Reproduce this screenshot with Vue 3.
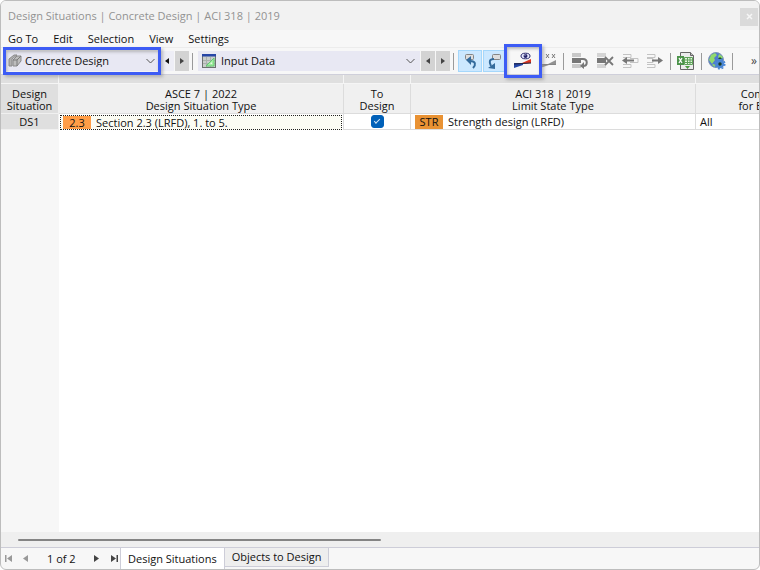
<script setup>
import { ref } from "vue";

const menus = ["Go To", "Edit", "Selection", "View", "Settings"];
const tabs = ["Design Situations", "Objects to Design"];

const addon = ref("Concrete Design");
const view = ref("Input Data");
const activeTab = ref(tabs[0]);

const columns = [
  { key: "ds", lines: ["Design", "Situation"] },
  { key: "type", lines: ["ASCE 7 | 2022", "Design Situation Type"] },
  { key: "active", lines: ["To", "Design"] },
  { key: "limit", lines: ["ACI 318 | 2019", "Limit State Type"] },
  { key: "combos", lines: ["Combinations to Design", "for Enumeration Method"] },
];

const rows = ref([
  {
    id: "DS1",
    typeTag: "2.3",
    type: "Section 2.3 (LRFD), 1. to 5.",
    active: true,
    limitTag: "STR",
    limit: "Strength design (LRFD)",
    combos: "All",
  },
]);
</script>

<template>
  <div class="window">
    <header class="titlebar">
      <h1>Design Situations | Concrete Design | ACI 318 | 2019</h1>
      <button class="close" aria-label="Close">
        <svg width="7" height="7" viewBox="0 0 7 7"><path d="M1 1l5 5M6 1L1 6" stroke="#f6f6f6" stroke-width="1.500" /></svg>
      </button>
    </header>

    <nav class="menubar">
      <button v-for="menu in menus" :key="menu">{{ menu }}</button>
    </nav>

    <div class="toolbar">
      <div class="combo addon marked">
        <svg class="combo-icon" width="14" height="14" viewBox="0 0 14 14">
          <path d="M1 5l5-4h3L4 5v7H1z" fill="#b0b0b0" stroke="#8a8a8a" />
          <path d="M5 6l4-4h4v5l-4 5H5z" fill="#bdbdbd" stroke="#8a8a8a" />
          <path d="M5 6h4v6M9 6l4-4" fill="none" stroke="#7b7b7b" />
        </svg>
        <select v-model="addon" aria-label="Add-on">
          <option>Concrete Design</option>
        </select>
        <svg class="chevron" width="9" height="6" viewBox="0 0 9 6"><path d="M.5 1l4 4 4-4" /></svg>
      </div>
      <button class="step plain" aria-label="Previous add-on">
        <svg width="4" height="6" viewBox="0 0 4 6"><path d="M4 0v6L0 3z" fill="#111" /></svg>
      </button>
      <button class="step" aria-label="Next add-on">
        <svg width="4" height="6" viewBox="0 0 4 6"><path d="M0 0v6l4-3z" fill="#444" /></svg>
      </button>
      <span class="sep"></span>

      <div class="combo view">
        <svg class="combo-icon" width="14" height="14" viewBox="0 0 14 14">
          <rect x=".5" y=".5" width="13" height="13" fill="#c9cdcb" stroke="#6b716e" />
          <path d="M0 0h14v2.500H0z" fill="#2746a6" />
          <path d="M1 6.500h12M1 9.500h12M4.500 3v10M8.500 3v10" stroke="#aab0ad" />
          <path d="M12 4v8H4z" fill="#a1eda0" stroke="#62c873" />
          <path d="M10 8v2H8z" fill="#e9f7e9" />
        </svg>
        <select v-model="view" aria-label="Table category">
          <option>Input Data</option>
        </select>
        <svg class="chevron" width="9" height="6" viewBox="0 0 9 6"><path d="M.5 1l4 4 4-4" /></svg>
      </div>
      <button class="step" aria-label="Previous table">
        <svg width="4" height="6" viewBox="0 0 4 6"><path d="M4 0v6L0 3z" fill="#444" /></svg>
      </button>
      <button class="step" aria-label="Next table">
        <svg width="4" height="6" viewBox="0 0 4 6"><path d="M0 0v6l4-3z" fill="#444" /></svg>
      </button>
      <span class="sep"></span>

      <button class="tool on" aria-label="Synchronize selection to model">
        <svg width="18" height="18" viewBox="0 0 18 18">
          <rect x="4.500" y="2.500" width="8" height="5" rx="1" fill="#dedede" stroke="#858585" />
          <path d="M12 16c3-3 3-7-3-7" fill="none" stroke="#346b9c" stroke-width="2" />
          <path d="M10 4v9L5 8z" fill="#346b9c" />
        </svg>
      </button>
      <button class="tool on" aria-label="Synchronize selection from model">
        <svg width="18" height="18" viewBox="0 0 18 18">
          <rect x="6.500" y="2.500" width="8" height="5" rx="1" fill="#dedede" stroke="#858585" />
          <path d="M8 7c-5 0-5 3-3 7" fill="none" stroke="#346b9c" stroke-width="2" />
          <path d="M2 16l7-5v6z" fill="#346b9c" />
        </svg>
      </button>
      <button class="tool marked wide" aria-label="Show result diagram">
        <svg width="20" height="18" viewBox="0 0 20 18">
          <path d="M1 11l9 0v2l-9 3z" fill="#2446a8" />
          <path d="M9 11l9-4v4l-9 1z" fill="#dc3420" />
          <path d="M1 12l17-1" stroke="#23233f" />
          <ellipse cx="12.500" cy="4" rx="4.500" ry="2.800" fill="#e9ebff" stroke="#27276b" />
          <circle cx="12.500" cy="4" r="2" fill="#24246c" />
          <circle cx="12" cy="3" r=".6" fill="#fff" />
        </svg>
      </button>
      <button class="tool" aria-label="Show result values">
        <svg width="18" height="18" viewBox="0 0 18 18">
          <path d="M1 12h9v1l-9 3zM9 12l8-4v4z" fill="#929292" />
          <path d="M1 12.500h16" stroke="#858585" />
          <path d="M2 6h1M7 2l3 4M10 2L7 6M13 2l3 4M16 2l-3 4" fill="none" stroke="#777" />
        </svg>
      </button>
      <span class="sep"></span>

      <button class="tool row" aria-label="Restore row">
        <svg width="18" height="18" viewBox="0 0 18 18">
          <path d="M1 1h9v4H1zM1 12h9v4H1z" fill="#c8c8c8" />
          <path d="M1 6h9v5H1z" fill="#777" />
          <path d="M9 7h3c5 0 5 7 0 7" fill="none" stroke="#777" stroke-width="2" />
          <path d="M13 10v7l-4-3z" fill="#777" />
        </svg>
      </button>
      <button class="tool row" aria-label="Delete row">
        <svg width="18" height="18" viewBox="0 0 18 18">
          <path d="M1 1h9v4H1zM1 12h9v4H1z" fill="#d4d4d4" />
          <path d="M1 6h9v5H1z" fill="#777" />
          <path d="M9 5l8 8M17 5l-8 8" stroke="#777" stroke-width="1.800" />
        </svg>
      </button>
      <button class="tool row" aria-label="Insert row">
        <svg width="18" height="18" viewBox="0 0 18 18">
          <path d="M2 2.500h8v3H2M2 12.500h8v3H2M9 6.500h8v4H9" fill="none" stroke="#c3c3c3" />
          <path d="M5 8.500h8" stroke="#777" stroke-width="2" />
          <path d="M6 5v7L1 8.500z" fill="#777" />
        </svg>
      </button>
      <button class="tool row" aria-label="Append row">
        <svg width="18" height="18" viewBox="0 0 18 18">
          <path d="M1 2.500h8v3H1M1 12.500h8v3H1M1 6.500h6v4H1" fill="none" stroke="#c3c3c3" />
          <path d="M6 8.500h8" stroke="#777" stroke-width="2" />
          <path d="M12 5v7l5-3.500z" fill="#777" />
        </svg>
      </button>
      <span class="sep"></span>

      <button class="tool" aria-label="Export to Excel">
        <svg width="18" height="18" viewBox="0 0 18 18">
          <path d="M3.500 .5h10l3 3v14h-13z" fill="#ececec" stroke="#666" />
          <path d="M13.500 .5v3h3" fill="#bbb" stroke="#666" />
          <path d="M7.500 5.500h8v7h-8zM8 8h7M8 10.500h7M10.500 5.500v7M13 5.500v7" fill="#e4f3e0" stroke="#5ea258" />
          <rect y="4" width="7" height="9" fill="#4c934a" />
          <path d="M2 6l3 5M5 6l-3 5" stroke="#fff" stroke-width="1.300" />
          <path d="M8 14h5l-2.500 3z" fill="#4b9b42" />
        </svg>
      </button>
      <span class="sep"></span>
      <button class="tool" aria-label="Online settings">
        <svg width="18" height="18" viewBox="0 0 18 18">
          <circle cx="8" cy="8" r="7.500" fill="#5079d0" stroke="#8197b5" />
          <path d="M3 3l4-2 2 2-3 3 1 2-3 4-3-4zM11 2l4 3-2 3-3-3zM5 12l3 1-1 2-3-2z" fill="#91da6c" />
          <circle cx="12" cy="12" r="3" fill="none" stroke="#4a86d4" stroke-width="2.500" />
          <circle cx="12" cy="12" r="4.800" fill="none" stroke="#4a86d4" stroke-width="1.500" stroke-dasharray="2 1.770" />
          <circle cx="12" cy="12" r="1.700" fill="#173c27" />
          <path d="M10 7l2-2 2 2z" fill="#174b2a" />
        </svg>
      </button>
      <span class="sep"></span>
      <button class="more" aria-label="More tools">»</button>
    </div>

    <main class="grid">
      <table>
        <colgroup>
          <col v-for="col in columns" :key="col.key" :class="col.key" />
        </colgroup>
        <thead>
          <tr class="strip">
            <td v-for="col in columns" :key="col.key"></td>
          </tr>
          <tr>
            <th v-for="col in columns" :key="col.key" scope="col">
              <template v-for="(line, i) in col.lines" :key="line"><br v-if="i" />{{ line }}</template>
            </th>
          </tr>
        </thead>
        <tbody>
          <tr v-for="row in rows" :key="row.id">
            <th scope="row">{{ row.id }}</th>
            <td class="current"><div><span class="tag">{{ row.typeTag }}</span>{{ row.type }}</div></td>
            <td class="check"><input v-model="row.active" type="checkbox" :aria-label="'Design ' + row.id" /></td>
            <td class="limit"><div><span class="tag dark">{{ row.limitTag }}</span>{{ row.limit }}</div></td>
            <td class="combos">{{ row.combos }}</td>
          </tr>
        </tbody>
      </table>
    </main>

    <div class="scrollbar"><div class="thumb"></div></div>

    <footer class="footer">
      <div class="pager">
        <button class="dim" aria-label="First table">
          <svg width="8" height="7" viewBox="0 0 8 7"><path d="M0 0h1.500v7H0zM7 0v7L2 3.500z" /></svg>
        </button>
        <button class="dim" aria-label="Previous table">
          <svg width="5" height="7" viewBox="0 0 5 7"><path d="M5 0v7L0 3.500z" /></svg>
        </button>
        <span class="page">1 of 2</span>
        <button aria-label="Next table">
          <svg width="5" height="7" viewBox="0 0 5 7"><path d="M0 0v7l5-3.500z" /></svg>
        </button>
        <button aria-label="Last table">
          <svg width="8" height="7" viewBox="0 0 8 7"><path d="M1 0v7l5-3.500zM6.500 0H8v7H6.500z" /></svg>
        </button>
      </div>
      <button
        v-for="tab in tabs"
        :key="tab"
        class="tab"
        :class="{ active: tab === activeTab }"
        @click="activeTab = tab"
      >
        {{ tab }}
      </button>
    </footer>
  </div>
</template>

<style>
body {
  margin: 0;
  background: #fff;
}
</style>

<style scoped>
.window {
  box-sizing: border-box;
  min-height: 100vh;
  display: flex;
  flex-direction: column;
  overflow: hidden;
  border: 1px solid #bdbdbd;
  border-radius: 6px;
  background: #f7f7f7;
  color: #111;
  font: 11px/12px "Open Sans", "Noto Sans", sans-serif;
}

button,
select {
  border: 0;
  padding: 0;
  background: none;
  color: inherit;
  font: inherit;
}

svg {
  display: block;
}

.titlebar {
  display: flex;
  align-items: center;
  justify-content: space-between;
  height: 29px;
  padding-left: 7px;
  background: #f2f2f2;
}

h1 {
  margin: 0;
  color: #929292;
  font-size: 11px;
  font-weight: 400;
}

.close {
  display: grid;
  place-items: center;
  width: 18px;
  height: 18px;
  margin: 2px 1px 0 0;
  background: #dadada;
}

.menubar {
  display: flex;
  align-items: center;
  gap: 15px;
  height: 17px;
  padding-left: 7px;
}

.toolbar {
  display: flex;
  align-items: center;
  height: 26px;
  padding-left: 3px;
  border-top: 1px solid #ececec;
  border-bottom: 1px solid #cfcfda;
}

.combo {
  position: relative;
  display: flex;
  align-items: center;
  height: 20px;
  background: #e8e8f3;
}

.combo.addon {
  width: 156px;
}

.combo.view {
  width: 222px;
  margin-left: 2px;
}

.combo select {
  width: 100%;
  height: 100%;
  padding-left: 21px;
  appearance: none;
}

.combo.view select {
  padding-left: 23px;
}

.combo-icon {
  position: absolute;
  left: 4px;
}

.chevron {
  position: absolute;
  right: 5px;
  fill: none;
  stroke: #555;
}

/* blue frame lies over the neighbouring tools */
.marked {
  position: relative;
}

.marked::after {
  content: "";
  position: absolute;
  inset: -4px -1px;
  z-index: 1;
  border: 3px solid #3d5cf5;
  box-shadow: 2px 2px 3px #8888, inset 1px 2px 3px #8888;
  pointer-events: none;
}

.step {
  display: grid;
  place-items: center;
  flex: none;
  width: 14px;
  height: 20px;
  margin-left: 1px;
  background: #d3d3d3;
}

.step.plain {
  margin-left: 0;
  background: #eeeef6;
}

.sep {
  flex: none;
  width: 1px;
  height: 17px;
  margin: 0 3px;
  background: #9a9a9a;
}

.tool {
  display: grid;
  place-items: center;
  flex: none;
  width: 24px;
  height: 22px;
}

.tool.on {
  box-sizing: border-box;
  margin-left: 1px;
  border: 1px solid #a5d7fb;
  background: #cce8ff;
}

.tool.wide {
  width: 38px;
  height: 28px;
  margin: 0 -6px 0 -3px;
}

.tool.wide::after {
  inset: -3px 0;
}

.tool.row {
  width: 25px;
}

.more {
  margin: 0 2px 0 auto;
  color: #444;
  font-size: 12px;
}

.grid {
  flex: 1;
  overflow: hidden;
  background: linear-gradient(to right, #f7f7f7 58px, #fff 58px);
}

table {
  width: 908px;
  table-layout: fixed;
  border-collapse: separate;
  border-spacing: 0;
}

col.ds {
  width: 58px;
}

col.type,
col.limit {
  width: 285px;
}

col.active {
  width: 67px;
}

col.combos {
  width: 213px;
}

th,
td {
  box-sizing: border-box;
  padding: 0;
  border-right: 1px solid #dcdcdc;
  border-bottom: 1px solid #dcdcdc;
  font-weight: 400;
  white-space: nowrap;
}

.strip td {
  height: 9px;
  border-right-color: #f5f5f5;
  border-bottom-color: #f5f5f5;
  background: #dfdfdf;
}

thead th {
  height: 30px;
  padding-top: 3px;
  background: #f0f0f0;
}

thead th:first-child,
tbody th {
  border-color: #f0f0f0;
  background: #dfdfdf;
}

tbody th,
tbody td {
  height: 16px;
}

.current {
  border-bottom: 0;
}

.current div {
  box-sizing: border-box;
  display: flex;
  height: 15px;
  margin: 0 1px;
  border: 1px dotted #222;
  background: #fbfcf4;
  line-height: 14px;
}

.limit div {
  display: flex;
  padding-left: 4px;
  line-height: 14px;
}

.tag {
  width: 28px;
  margin: 0 5px 0 2px;
  background: #ff9d47;
  text-align: center;
}

.tag.dark {
  margin-left: 0;
  background: #e99233;
}

.combos {
  padding-left: 4px;
}

.check input {
  display: grid;
  place-items: center;
  width: 13px;
  height: 13px;
  margin: 0 auto;
  border: 1px solid #0060b8;
  border-radius: 3px;
  appearance: none;
}

.check input:checked {
  background: #0060b8;
}

.check input:checked::after {
  content: "";
  width: 5px;
  height: 2px;
  margin-bottom: 2px;
  border: solid #d5e6f5;
  border-width: 0 0 1px 1px;
  transform: rotate(-45deg);
}

.scrollbar {
  display: flex;
  align-items: center;
  height: 15px;
  padding-left: 17px;
  border-bottom: 1px solid #cdcdd8;
  background: #efefef;
}

.thumb {
  width: 49%;
  height: 2px;
  border-radius: 1px;
  background: #848484;
}

.footer {
  display: flex;
  align-items: flex-start;
  height: 21px;
}

.pager {
  display: flex;
  align-items: center;
  width: 119px;
  height: 21px;
}

.pager button {
  margin-left: 4px;
  fill: #444;
}

.pager .dim {
  fill: #999;
}

.pager .dim + .dim {
  margin-left: 10px;
}

.page {
  margin: 0 14px 0 19px;
}

.page + button + button {
  margin-left: 11px;
}

.tab {
  height: 19px;
  padding: 0 7px;
  border: solid #cdcdd8;
  border-width: 0 1px 1px 0;
  background: #eee;
}

.tab.active {
  height: 21px;
  border-width: 0 1px;
  background: #fff;
}
</style>
